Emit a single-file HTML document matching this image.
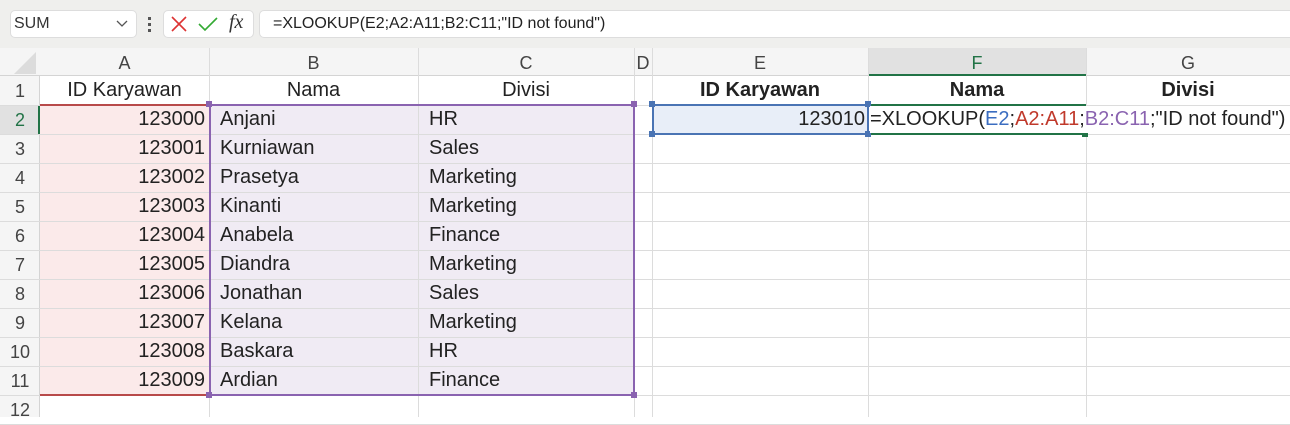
<!DOCTYPE html>
<html><head><style>
body{margin:0;width:1290px;height:417px;overflow:hidden;background:#fff;font-family:"Liberation Sans",sans-serif;position:relative}
.a{position:absolute;box-sizing:border-box}
.t{position:absolute;font-size:20px;line-height:29px;color:#222;white-space:nowrap}
.h{position:absolute;font-size:18px;color:#444;text-align:center;line-height:26px}
</style></head><body>
<div class="a" style="left:0;top:0;width:1290px;height:48px;background:#efefed"></div>
<div class="a" style="left:10px;top:10px;width:127px;height:28px;background:#fff;border:1px solid #ddd;border-radius:5px"></div>
<div class="t" style="left:14px;top:9px;font-size:16px;color:#333">SUM</div>
<svg class="a" style="left:116px;top:19px" width="12" height="10"><path d="M1 2 L6 7 L11 2" stroke="#555" stroke-width="1.3" fill="none"/></svg>
<div class="a" style="left:148px;top:17px;width:3px;height:3px;background:#555"></div>
<div class="a" style="left:148px;top:23px;width:3px;height:3px;background:#555"></div>
<div class="a" style="left:148px;top:29px;width:3px;height:3px;background:#555"></div>
<div class="a" style="left:163px;top:10px;width:91px;height:28px;background:#fff;border:1px solid #ddd;border-radius:5px"></div>
<svg class="a" style="left:170px;top:15px" width="18" height="18"><path d="M2 2 L16 16 M16 2 L2 16" stroke="#d33" stroke-width="1.6"/></svg>
<svg class="a" style="left:197px;top:15px" width="22" height="18"><path d="M2 9 L8 15 L20 3" stroke="#3a3" stroke-width="1.6" fill="none"/></svg>
<div class="t" style="left:229px;top:8px;font-family:'Liberation Serif',serif;font-style:italic;font-size:20px;color:#333">fx</div>
<div class="a" style="left:259px;top:10px;width:1040px;height:28px;background:#fff;border:1px solid #ddd;border-radius:5px"></div>
<div class="t" style="left:273px;top:9px;font-size:16px;color:#222">=XLOOKUP(E2;A2:A11;B2:C11;"ID not found")</div>
<div class="a" style="left:0;top:48px;width:1290px;height:28px;background:#f5f5f5;border-bottom:1px solid #d4d4d4"></div>
<div class="a" style="left:868px;top:48px;width:218px;height:28px;background:#e1e1e1;border-bottom:2px solid #217346"></div>
<svg class="a" style="left:14px;top:52px" width="22" height="22"><path d="M22 0 L22 22 L0 22 Z" fill="#dcdcdc"/></svg>
<div class="a" style="left:0;top:76px;width:40px;height:341px;background:#f5f5f5;border-right:1px solid #d4d4d4"></div>
<div class="a" style="left:0;top:105px;width:40px;height:29px;background:#e1e1e1;border-right:2px solid #217346"></div>
<div class="a" style="left:40px;top:105px;width:169px;height:290px;background:#fbeaea"></div>
<div class="a" style="left:209px;top:105px;width:425px;height:290px;background:#f0ebf4"></div>
<div class="a" style="left:652px;top:105px;width:216px;height:29px;background:#e8eef8"></div>
<div id="g"></div>
<script>
var cols=[40,209,418,634,652,868,1086,1290],names="ABCDEFG";
var h='';
for(var i=0;i<7;i++){h+='<div class="a" style="left:'+cols[i+1]+'px;top:48px;width:1px;height:369px;background:#dcdcdc"></div>';
h+='<div class="h" style="left:'+cols[i]+'px;top:50px;width:'+(cols[i+1]-cols[i])+'px;'+(i==5?'color:#217346':'')+'">'+names[i]+'</div>';}
for(var r=0;r<12;r++){var y=76+r*29;h+='<div class="a" style="left:0;top:'+(y+29)+'px;width:1290px;height:1px;background:#dcdcdc"></div>';
h+='<div class="h" style="left:0;top:'+(y+2)+'px;width:40px;'+(r==1?'color:#217346':'')+'">'+(r+1)+'</div>';}
var n=["Anjani","Kurniawan","Prasetya","Kinanti","Anabela","Diandra","Jonathan","Kelana","Baskara","Ardian"],d=["HR","Sales","Marketing","Marketing","Finance","Marketing","Sales","Marketing","HR","Finance"];
for(var r=0;r<10;r++){var y=105+r*29;h+='<div class="t" style="left:40px;width:165px;text-align:right;top:'+y+'px">'+(123000+r)+'</div>';
h+='<div class="t" style="left:220px;top:'+y+'px">'+n[r]+'</div><div class="t" style="left:429px;top:'+y+'px">'+d[r]+'</div>';}
document.getElementById('g').innerHTML=h;
</script>
<div class="t" style="left:40px;width:169px;text-align:center;top:76px">ID Karyawan</div>
<div class="t" style="left:209px;width:209px;text-align:center;top:76px">Nama</div>
<div class="t" style="left:418px;width:216px;text-align:center;top:76px">Divisi</div>
<div class="t" style="left:652px;width:216px;text-align:center;top:76px;font-weight:bold">ID Karyawan</div>
<div class="t" style="left:868px;width:218px;text-align:center;top:76px;font-weight:bold">Nama</div>
<div class="t" style="left:1086px;width:204px;text-align:center;top:76px;font-weight:bold">Divisi</div>
<div class="a" style="left:40px;top:104px;width:170px;height:292px;border-top:2px solid #b84a4a;border-bottom:2px solid #b84a4a"></div>
<div class="a" style="left:209px;top:104px;width:426px;height:292px;border:2px solid #8a63b0"></div>
<div class="a" style="left:652px;top:104px;width:217px;height:31px;border:2px solid #4a74b4"></div>
<div class="a" style="left:868px;top:104px;width:218px;height:31px;border:2px solid #217346;border-left:none;border-right:none"></div>
<div class="a" style="left:206px;top:101px;width:6px;height:6px;background:#8a63b0"></div>
<div class="a" style="left:631px;top:101px;width:6px;height:6px;background:#8a63b0"></div>
<div class="a" style="left:206px;top:392px;width:6px;height:6px;background:#8a63b0"></div>
<div class="a" style="left:631px;top:392px;width:6px;height:6px;background:#8a63b0"></div>
<div class="a" style="left:649px;top:101px;width:6px;height:6px;background:#4a74b4"></div>
<div class="a" style="left:865px;top:101px;width:6px;height:6px;background:#4a74b4"></div>
<div class="a" style="left:649px;top:131px;width:6px;height:6px;background:#4a74b4"></div>
<div class="a" style="left:865px;top:131px;width:6px;height:6px;background:#4a74b4"></div>
<div class="a" style="left:1082px;top:131px;width:6px;height:6px;background:#217346"></div>
<div class="t" style="left:652px;width:213px;text-align:right;top:105px">123010</div>
<div class="t" style="left:870px;top:106px;height:27px;line-height:27px;background:#fff;padding-right:3px">=XLOOKUP(<span style="color:#3b6dc0">E2</span>;<span style="color:#c0392b">A2:A11</span>;<span style="color:#8a63b0">B2:C11</span>;"ID not found")</div>
</body></html>
